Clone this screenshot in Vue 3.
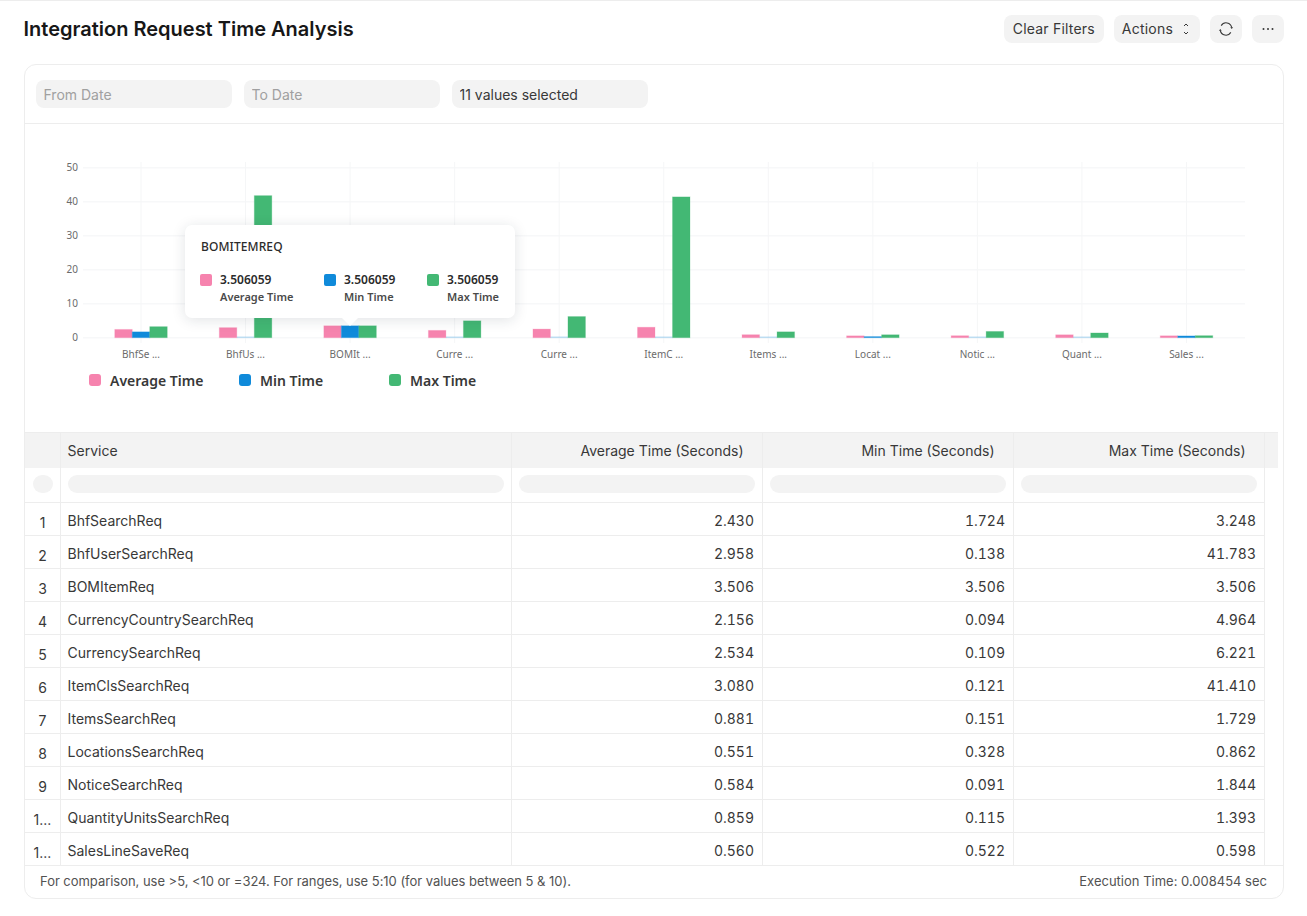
<script setup>
const rows = [
  { name: 'BhfSearchReq', avg: 2.43, min: 1.724, max: 3.248 },
  { name: 'BhfUserSearchReq', avg: 2.958, min: 0.138, max: 41.783 },
  { name: 'BOMItemReq', avg: 3.506, min: 3.506, max: 3.506 },
  { name: 'CurrencyCountrySearchReq', avg: 2.156, min: 0.094, max: 4.964 },
  { name: 'CurrencySearchReq', avg: 2.534, min: 0.109, max: 6.221 },
  { name: 'ItemClsSearchReq', avg: 3.08, min: 0.121, max: 41.41 },
  { name: 'ItemsSearchReq', avg: 0.881, min: 0.151, max: 1.729 },
  { name: 'LocationsSearchReq', avg: 0.551, min: 0.328, max: 0.862 },
  { name: 'NoticeSearchReq', avg: 0.584, min: 0.091, max: 1.844 },
  { name: 'QuantityUnitsSearchReq', avg: 0.859, min: 0.115, max: 1.393 },
  { name: 'SalesLineSaveReq', avg: 0.56, min: 0.522, max: 0.598 }
]

const series = [
  { key: 'avg', label: 'Average Time', color: '#f683ae' },
  { key: 'min', label: 'Min Time', color: '#0f8ada' },
  { key: 'max', label: 'Max Time', color: '#43b874' }
]

// chart scale, in page pixels (the svg viewBox starts at the chart's corner)
const baseY = 337.7
const unit = 3.4
const step = 104.55
const firstX = 141
const barW = 17.5

const ticks = [0, 10, 20, 30, 40, 50]
const groupX = (i) => firstX + step * i

const bars = rows.flatMap((r, i) =>
  series.map((s, j) => {
    const h = r[s.key] * unit
    // very small values only show as a pale line on the axis
    const tiny = h < 0.6
    return {
      id: r.name + s.key,
      x: groupX(i) - barW * 1.5 + barW * j,
      y: tiny ? baseY - 1.2 : baseY - h,
      h: tiny ? 1.6 : h,
      color: s.color,
      opacity: tiny ? 0.25 : 1,
      strokeOpacity: tiny ? 0 : 0.25
    }
  })
)

const tipItems = [
  { label: 'Average Time', color: '#f683ae', width: 124, align: 'left' },
  { label: 'Min Time', color: '#0f8ada', width: 103, align: 'left' },
  { label: 'Max Time', color: '#43b874', width: 73, align: 'right' }
]

const indexLabel = (i) => (i >= 9 ? '1...' : String(i + 1))
</script>

<template>
  <div class="page">
    <header class="head">
      <h1>Integration Request Time Analysis</h1>
      <div class="actions">
        <button class="btn btn-clear">Clear Filters</button>
        <button class="btn btn-actions">
          Actions
          <svg width="8" height="12" viewBox="0 0 8 12" fill="none" stroke="#383838" stroke-width="1">
            <path d="M2 3L4 1L6 3" />
            <path d="M2 9L4 11L6 9" />
          </svg>
        </button>
        <button class="btn btn-icon">
          <svg width="16" height="16" viewBox="0 0 16 16" fill="none" stroke="#383838" stroke-width="1.1">
            <path d="M3.2 4.6A5.7 5.7 0 0 1 13.7 6.6" />
            <path d="M12.8 11.4A5.7 5.7 0 0 1 2.3 9.4" />
            <path d="M12.3 6.2L15.1 6.2L13.7 8.1Z" fill="#383838" stroke="none" />
            <path d="M0.9 9.8L3.7 9.8L2.3 7.9Z" fill="#383838" stroke="none" />
          </svg>
        </button>
        <button class="btn btn-icon">
          <svg width="16" height="16" viewBox="0 0 16 16" fill="#383838">
            <circle cx="3.5" cy="8" r="1" />
            <circle cx="8" cy="8" r="1" />
            <circle cx="12.5" cy="8" r="1" />
          </svg>
        </button>
      </div>
    </header>

    <section class="card">
      <div class="filters">
        <input class="field" placeholder="From Date" />
        <input class="field" placeholder="To Date" />
        <input class="field" value="11 values selected" />
      </div>

      <div class="chart">
        <svg class="plot" width="1258" height="240" viewBox="25 124 1258 240">
          <line v-for="t in ticks" :key="'h' + t" x1="83" x2="1245" :y1="baseY - t * unit" :y2="baseY - t * unit" class="grid" />
          <line v-for="(r, i) in rows" :key="'v' + i" :x1="groupX(i)" :x2="groupX(i)" y1="162" y2="343" class="grid-v" />
          <text v-for="t in ticks" :key="'y' + t" x="78" :y="baseY - t * unit + 3.5" class="y-label">{{ t }}</text>
          <rect
            v-for="b in bars"
            :key="b.id"
            :x="b.x"
            :y="b.y"
            :width="barW"
            :height="b.h"
            :fill="b.color"
            :fill-opacity="b.opacity"
            :stroke="b.color"
            :stroke-opacity="b.strokeOpacity"
            stroke-width="1"
          />
          <text v-for="(r, i) in rows" :key="'x' + i" :x="groupX(i)" y="358" class="x-label">{{ r.name.slice(0, 5) }} ...</text>
        </svg>

        <div class="legend">
          <div v-for="s in series" :key="s.key" class="legend-item">
            <span class="legend-dot" :style="{ background: s.color }"></span>
            {{ s.label }}
          </div>
        </div>

        <div class="tooltip">
          <div class="tip-title">BOMITEMREQ</div>
          <div class="tip-row">
            <div v-for="it in tipItems" :key="it.label" class="tip-item" :style="{ width: it.width + 'px' }">
              <span class="tip-dot" :style="{ background: it.color }"></span>
              <div class="tip-text">
                <div class="tip-value">3.506059</div>
                <div class="tip-label" :class="{ right: it.align === 'right' }">{{ it.label }}</div>
              </div>
            </div>
          </div>
          <span class="tip-arrow"></span>
        </div>
      </div>

      <div class="table">
        <div class="tr tr-head">
          <div class="td idx"></div>
          <div class="td">Service</div>
          <div class="td num-head">Average Time (Seconds)</div>
          <div class="td num-head">Min Time (Seconds)</div>
          <div class="td num-head">Max Time (Seconds)</div>
          <div class="td-spacer"></div>
        </div>
        <div class="tr tr-filter">
          <div class="td idx"><span class="pill-round"></span></div>
          <div class="td"><span class="pill"></span></div>
          <div class="td"><span class="pill"></span></div>
          <div class="td"><span class="pill"></span></div>
          <div class="td"><span class="pill"></span></div>
        </div>
        <div v-for="(r, i) in rows" :key="r.name" class="tr tr-body">
          <div class="td idx">{{ indexLabel(i) }}</div>
          <div class="td">{{ r.name }}</div>
          <div class="td num">{{ r.avg.toFixed(3) }}</div>
          <div class="td num">{{ r.min.toFixed(3) }}</div>
          <div class="td num">{{ r.max.toFixed(3) }}</div>
        </div>
      </div>

      <footer class="foot">
        <span class="foot-hint">For comparison, use &gt;5, &lt;10 or =324. For ranges, use 5:10 (for values between 5 &amp; 10).</span>
        <span>Execution Time: 0.008454 sec</span>
      </footer>
    </section>
  </div>
</template>

<style>
html, body { background: #fff; }
</style>

<style scoped>
.page { font-family: Inter, "Liberation Sans", sans-serif; color: #383838; font-size: 14px; border-top: 1px solid #ededed; height: 915px; box-sizing: border-box; padding: 0 23px 0 24px; }

.head { display: flex; justify-content: space-between; align-items: center; height: 63px; padding-bottom: 7px; box-sizing: border-box; }
.head h1 { margin: 0 0 0 -0.5px; font-size: 20px; font-weight: 600; color: #171717; }
.actions { display: flex; gap: 10px; }
.btn { height: 28px; padding: 0 8px 1px; border: none; border-radius: 8px; background: #f3f3f3; color: #383838; font: inherit; letter-spacing: 0.21px; display: flex; align-items: center; justify-content: center; }
.btn-clear { width: 100px; }
.btn-actions { gap: 9px; padding-right: 10px; }
.btn-icon { width: 32px; padding: 0; }

.card { border: 1px solid #ededed; border-radius: 12px; height: 835px; box-sizing: border-box; display: flex; flex-direction: column; overflow: hidden; }

.filters { display: flex; gap: 12px; height: 59px; padding: 15px 11px; box-sizing: border-box; border-bottom: 1px solid #ededed; }
.field { width: 196px; height: 28px; box-sizing: border-box; border: none; border-radius: 8px; background: #f3f3f3; padding: 0 7.5px; font: inherit; color: #383838; outline: none; }
.field::placeholder { color: #a0a0a0; opacity: 1; }

.chart { position: relative; height: 308px; flex: none; }
.plot { display: block; }
.grid { stroke: #f7f8f9; stroke-width: 1.5; }
.grid-v { stroke: #f5f6f7; stroke-width: 1; }
.y-label { font: 10px "Noto Sans", sans-serif; fill: #6b6b6b; text-anchor: end; }
.x-label { font: 10px "Noto Sans", sans-serif; fill: #6b6b6b; text-anchor: middle; }

.legend { display: flex; padding: 4px 0 0 64px; }
.legend-item { width: 150px; display: flex; align-items: center; gap: 9px; height: 24px; font: 600 14px "Noto Sans", sans-serif; color: #383838; }
.legend-dot { width: 12px; height: 12px; border-radius: 3px; }

.tooltip { position: absolute; left: 160px; top: 101px; width: 330px; height: 93px; box-sizing: border-box; padding: 15px 16px; background: #fff; border-radius: 7px; box-shadow: 0 2px 14px rgba(25, 39, 52, 0.13); font-family: "Noto Sans", sans-serif; color: #2b2b2b; }
.tip-title { font-size: 12px; font-weight: 500; letter-spacing: 0.1px; line-height: 14px; }
.tip-row { display: flex; margin-top: 18px; margin-left: -1px; }
.tip-item { display: flex; gap: 8px; flex: none; }
.tip-dot { width: 12px; height: 12px; border-radius: 2px; margin-top: 2px; flex: none; }
.tip-value { font-size: 12px; font-weight: 600; line-height: 16px; white-space: nowrap; }
.tip-label { font-size: 11px; font-weight: 600; line-height: 18px; color: #4a4a4a; white-space: nowrap; }
.tip-label.right { text-align: right; }
.tip-arrow { position: absolute; left: 157px; bottom: -8px; border: 8px solid transparent; border-bottom: none; border-top-color: #fff; }

.table { flex: none; }
.tr { display: grid; grid-template-columns: 36px 451px 251px 251px 251px; width: 1240px; }
.td { box-sizing: border-box; border-right: 1px solid #ededed; padding: 0 7px 0 6.5px; display: flex; align-items: center; white-space: nowrap; min-width: 0; }
.tr-head { grid-template-columns: 36px 451px 251px 251px 251px 13px; width: 1253px; height: 36px; background: #f3f3f3; border-top: 1px solid #ededed; box-sizing: border-box; }
.num-head { justify-content: flex-end; padding-right: 18.5px; }
.td-spacer { background: #f3f3f3; }
.tr-filter { height: 35px; border-bottom: 1px solid #ededed; box-sizing: border-box; }
.tr-filter .td { padding: 0 7px 3px; }
.pill { display: block; width: 100%; height: 18px; border-radius: 9px; background: #f3f3f3; }
.pill-round { display: block; width: 20px; height: 18px; border-radius: 9px; background: #f3f3f3; margin-left: 1px; }
.tr-body { height: 33px; border-bottom: 1px solid #ededed; box-sizing: border-box; }
.tr-body:last-child { height: 32px; border-bottom: none; }
.tr-body .td { padding-top: 3px; }
.tr-body .idx { justify-content: center; padding: 7px 0 0; }
.idx { justify-content: flex-start; }
.num { justify-content: flex-end; font-variant-numeric: tabular-nums; padding-right: 8px; }

.foot { flex: none; border-top: 1px solid #ededed; height: 33px; box-sizing: border-box; display: flex; justify-content: space-between; align-items: center; padding: 0 16px 2px 15px; font-size: 13px; color: #525252; }
.foot-hint { letter-spacing: -0.035px; }
</style>
